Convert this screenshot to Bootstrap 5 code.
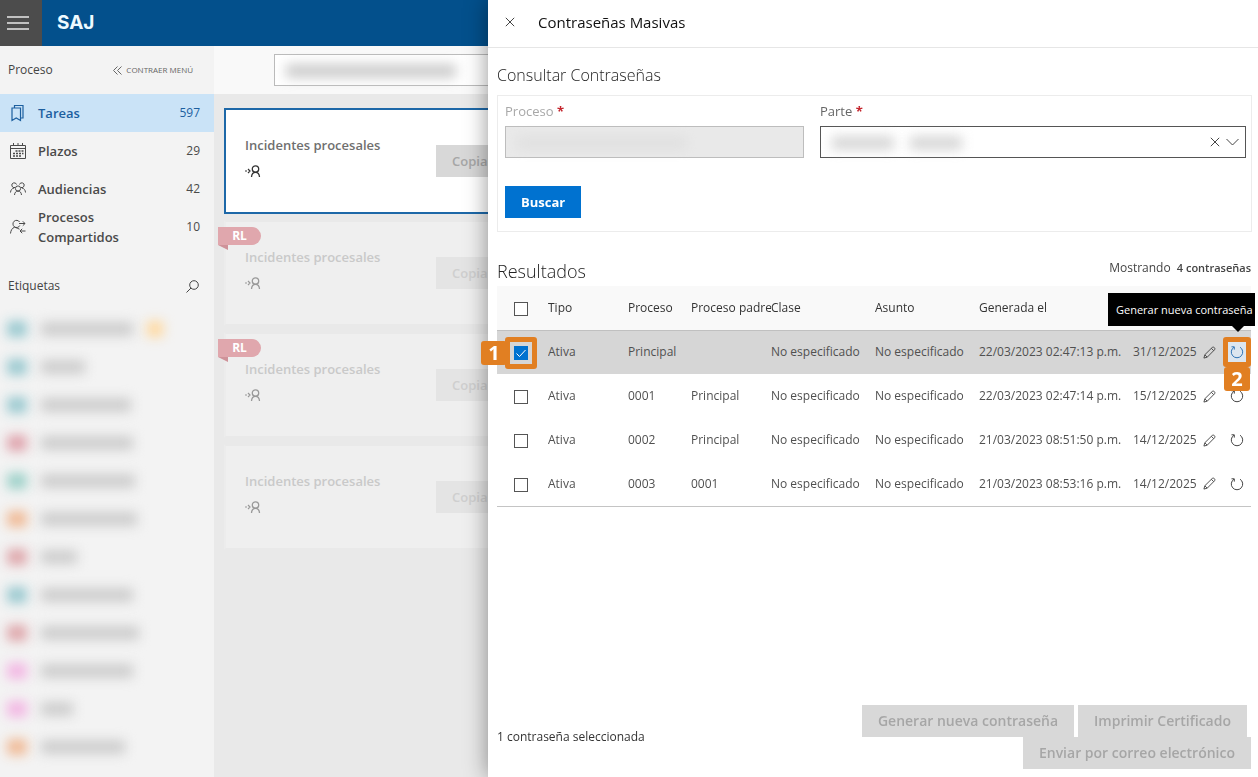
<!DOCTYPE html>
<html lang="es">
<head>
<meta charset="utf-8">
<meta name="viewport" content="width=device-width, initial-scale=1">
<title>SAJ - Contraseñas Masivas</title>
<link href="https://cdn.jsdelivr.net/npm/bootstrap@5.3.0/dist/css/bootstrap.min.css" rel="stylesheet">
<style>
  :root { --nav-w: 214px; --blue: #0072d0; --orange: #e17f22; }
  html, body { height: 100%; }
  body { font-family: "Open Sans", "Noto Sans", sans-serif; font-size: 12px; line-height: 20px; color: #444; overflow: hidden; }
  svg { display: block; fill: none; stroke: currentColor; flex: none; }
  a { color: inherit; text-decoration: none; }
  .btn { --bs-btn-border-radius: 0; --bs-btn-border-width: 0; --bs-btn-padding-x: 16px; --bs-btn-padding-y: 6px; --bs-btn-font-size: 14px; --bs-btn-line-height: 20px; --bs-btn-font-weight: 600; white-space: nowrap; }
  .btn-flat { --bs-btn-disabled-bg: #d8d8d8; --bs-btn-disabled-color: #a6a6a6; --bs-btn-disabled-opacity: 1; }
  .icon-btn { border: 0; background: none; padding: 0; color: #444; display: inline-flex; }

  .top-bar { height: 46px; background: #03508c; }
  .menu-toggle { width: 42px; height: 46px; background: #4c4c4c; color: #e8e8e8; align-items: center; padding-left: 7px; }
  .brand { font: 700 19px/20px "Inter", sans-serif; color: #eefaff; margin-left: 15px; }

  .side { width: var(--nav-w); background: #f3f3f3; flex: none; }
  .side-head { height: 48px; padding: 0 21px 0 8px; }
  .side-head.tags-head { padding-right: 15px; }
  .side-title { font-size: 12px; font-weight: 500; }
  .collapse-link { font-size: 8px; font-weight: 500; color: #666; }
  .side-item { height: 38px; padding: 0 14px 0 10px; font-size: 13px; font-weight: 600; gap: 12px; color: #4a4a4a; }
  .side-item .count { font-size: 12px; font-weight: 500; }
  .side-item.active { background: #cae3f7; color: #1c5f9f; }
  .tag-row { height: 38px; padding-left: 7px; gap: 14px; }
  .smudge { filter: blur(6px); height: 14px; background: #cdcdcd; }
  .smudge.chip { width: 20px; height: 16px; background: var(--c); opacity: .9; }
  .smudge.orb { width: 16px; height: 16px; background: #ffd9a0; }

  .search-bar { height: 48px; background: #f9f9f9; padding: 8px 0 8px 60px; }
  .search-bar .form-control { height: 32px; border: 1px solid #bbb; border-radius: 0; background: #fff; }
  .over-field { position: absolute; left: 12px; top: 10px; }
  .task-list { background: #e9e9e9; padding: 14px 0 0 10px; gap: 6px; }
  .task { position: relative; height: 106px; padding: 0 0 0 19px; background: #fff; border: 2px solid #1d68a8; font-size: 13px; font-weight: 600; color: #6f6f6f; }
  .task.idle { background: #efefef; border-color: #e9e9e9 #ececec; color: #c9c9c9; }
  .task-text { width: 191px; gap: 10px; padding-bottom: 10px; }
  .task-text svg { color: #333; }
  .task.idle svg { color: #999; }
  .task .btn-flat { --bs-btn-font-size: 13px; }
  .task.idle .btn-flat { --bs-btn-disabled-bg: #e4e4e4; --bs-btn-disabled-color: #cfcfcf; }
  .flag { position: absolute; left: -8px; top: 5px; width: 43px; height: 18px; border-radius: 0 9px 9px 0; background: #e0a7ad; color: #fff; font-size: 12px; line-height: 18px; font-weight: 700; text-align: center; }
  .flag::after { content: ""; position: absolute; left: 0; top: 18px; border-top: 5px solid #cf9299; border-left: 10px solid transparent; }

  .drawer { position: fixed; top: 0; right: 0; bottom: 0; left: 488px; background: #fff; box-shadow: 0 0 22px rgba(0,0,0,.42); }
  .drawer-head { height: 48px; padding: 0 17px 3px; gap: 23px; border-bottom: 1px solid #e6e6e6; }
  .drawer-head h1 { font-size: 15px; line-height: 20px; font-weight: 400; color: #111; }
  .drawer-body { padding: 16px 7px 8px 9px; }
  .drawer-body h2 { font-size: 16px; line-height: 22px; font-weight: 300; color: #222; }
  .query-box { border: 1px solid #ececec; height: 137px; padding: 5px 5px 13px 7px; margin: 9px -1px 0 0; }
  .fields { display: grid; grid-template-columns: 299fr 426fr; gap: 16px; }
  .fields label { font-size: 13px; line-height: 20px; margin-bottom: 5px; display: block; color: #666; }
  .fields label.off { color: #a8a8a8; }
  .req { color: #c4262e; font-weight: 700; }
  .fields .form-control { height: 32px; border-radius: 0; border: 1px solid #555; }
  .fields .form-control:disabled { background: #e9e9e9; border-color: #bdbdbd; }
  .field-tools { position: absolute; right: 7px; top: 10px; gap: 6px; color: #444; }
  .btn-search { --bs-btn-bg: var(--blue); --bs-btn-color: #fff; --bs-btn-hover-bg: #0064b8; --bs-btn-hover-color: #fff; --bs-btn-font-size: 13px; --bs-btn-font-weight: 700; margin-top: 28px; }
  .results-head { margin: 26px 0 2px; }
  .results-head h2 { font-size: 18px; line-height: 26px; }
  .results-head strong { font-size: 11px; font-weight: 600; margin-left: 3px; }

  .grid { table-layout: fixed; width: 100%; border-bottom: 1px solid #c4c4c4; color: #505050; }
  .grid th, .grid td { height: 44px; padding: 0; white-space: nowrap; vertical-align: middle; position: relative; }
  .grid th { background: #f9f9f9; font-weight: 500; color: #333; border-bottom: 1px solid #c0c0c0; }
  .grid tr.picked td { background: #d6d6d6; }
  .grid .form-check-input { width: 14px; height: 14px; margin: 2px 0 0 17px; border: 1px solid #555; border-radius: 0; display: block; }
  .grid .form-check-input:checked { background-color: var(--blue); border-color: var(--blue); background-size: 14px; background-image: url("data:image/svg+xml,%3csvg xmlns='http://www.w3.org/2000/svg' viewBox='0 0 14 14'%3e%3cpath fill='none' stroke='%23fff' d='M2.500 7.500l3 3 6-6.500'/%3e%3c/svg%3e"); }
  .grid .icon-btn { display: flex; margin: auto; }
  .picked .icon-btn.renew { color: #2f74b5; }
  .ring { position: absolute; border: 5px solid var(--orange); border-radius: 3px; pointer-events: none; }
  .ring.on-check { left: 8px; top: 6px; width: 32px; height: 32px; }
  .ring.on-renew { right: 0; top: 6px; width: 28px; height: 30px; background: #dce6ef; z-index: 0; }
  .renew { position: relative; z-index: 1; }
  .step { position: absolute; background: var(--orange); color: #fff; font-size: 20px; line-height: 24px; font-weight: 700; width: 26px; text-align: center; border-radius: 3px; z-index: 2; }
  .step.one { left: -16px; top: 10px; }
  .step.two { right: 1px; top: 36px; }
  .tip { position: absolute; right: -4px; bottom: 48px; background: #000; color: #fff; font-size: 11px; line-height: 33px; height: 33px; font-weight: 500; width: 147px; padding-left: 8px; z-index: 3; }
  .tip::after { content: ""; position: absolute; right: 11px; top: 33px; border: 6px solid transparent; border-top-color: #000; }
  .note { color: #333; }
</style>
</head>
<body>
<svg class="d-none">
  <symbol id="x" viewBox="0 0 10 10"><path d="M.8.8l8.4 8.4M9.2.8L.8 9.2"/></symbol>
  <symbol id="person" viewBox="0 0 16 12"><path stroke-width="1.200" d="M0 6h2M3 4l2 2-2 2"/><circle stroke-width="1.300" cx="10.500" cy="4" r="3.200"/><path stroke-width="1.300" d="M6.500 12c.2-3 1.600-4.600 4-4.600s3.800 1.600 4 4.600"/></symbol>
  <symbol id="pencil" viewBox="0 0 14 14"><path d="M1 13l1-3.600L10 1.500c1.400-1.200 3.700 1 2.500 2.500L4.600 12zM9 2.500L11.500 5M2 9.500L4.500 12"/></symbol>
  <symbol id="renew" viewBox="0 0 14 14"><path d="M4 2.200A5.700 5.700 0 1 0 10 2.200M1.500 1.800h2.800v2.800"/></symbol>
</svg>

<div class="d-flex flex-column h-100">
  <header class="top-bar d-flex align-items-center">
    <button class="icon-btn menu-toggle" aria-label="Menú"><svg width="22" height="14" viewBox="0 0 22 14" stroke-width="1.600"><path d="M0 1h22M0 7h22M0 13h22"/></svg></button>
    <a class="brand" href="#">SAJ</a>
  </header>

  <div class="d-flex flex-grow-1">
    <nav class="side">
      <div class="side-head d-flex align-items-center justify-content-between">
        <span class="side-title">Proceso</span>
        <a class="collapse-link d-flex align-items-center gap-1" href="#"><svg width="9" height="9" viewBox="0 0 9 9"><path d="M4.500.5l-4 4 4 4M8.500.5l-4 4 4 4"/></svg>CONTRAER MENÚ</a>
      </div>
      <a class="side-item active d-flex align-items-center" href="#">
        <svg width="16" height="18" viewBox="0 0 16 18" stroke-width="1.200"><path d="M2 4h8.500v12.500L6.200 14 2 16.500zM4.500 4V1.500H13V14h-2.500"/></svg>
        <span class="flex-grow-1">Tareas</span><span class="count">597</span></a>
      <a class="side-item d-flex align-items-center" href="#">
        <svg width="16" height="18" viewBox="0 0 16 18"><path d="M.5 3.500h15v13H.5zM.5 6.500h15M3.500 1v3M8 1v3M12.500 1v3"/><path stroke-width="1.600" stroke-dasharray="2 1" d="M5.500 9h8M3 11.500h10.500M3 14h8"/></svg>
        <span class="flex-grow-1">Plazos</span><span class="count">29</span></a>
      <a class="side-item d-flex align-items-center" href="#">
        <svg width="16" height="14" viewBox="0 0 16 14"><circle cx="8" cy="6.500" r="2.600"/><path d="M4.500 13c.2-2.500 1.400-3.900 3.500-3.900s3.300 1.400 3.500 3.900M5 5.500A2.400 2.400 0 1 1 6.500 2.500M4 6C1.800 6.600.7 8 .5 10.500M11 5.500A2.400 2.400 0 1 0 9.500 2.500M12 6c2.200.6 3.300 2 3.500 4.500"/></svg>
        <span class="flex-grow-1">Audiencias</span><span class="count">42</span></a>
      <a class="side-item d-flex align-items-center" href="#">
        <svg width="16" height="16" viewBox="0 0 16 16"><path d="M9.800 6.500A3.600 3.600 0 1 1 9.600 3M4.500 8.200C2 9.200.8 11.500.5 14.500M4.500 8.200c1.800.8 3.500.9 5 2M9 4.500h6M12.800 2.300L15 4.500l-2.200 2.200M15.500 12H10M12.200 9.800L10 12l2.200 2.200"/></svg>
        <span class="flex-grow-1">Procesos<br>Compartidos</span><span class="count">10</span></a>

      <div class="side-head tags-head d-flex align-items-center justify-content-between mt-3">
        <span class="side-title">Etiquetas</span>
        <button class="icon-btn" aria-label="Buscar etiqueta"><svg width="13" height="13" viewBox="0 0 13 13"><circle cx="8" cy="5" r="4.300"/><path d="M5 8L.5 12.500"/></svg></button>
      </div>
      <div id="tags" aria-hidden="true"></div>
    </nav>

    <main class="flex-grow-1 d-flex flex-column">
      <div class="search-bar"><div class="position-relative">
        <input class="form-control" type="text" aria-label="Buscar">
        <div class="smudge over-field" style="width:170px"></div>
      </div></div>
      <div class="task-list d-flex flex-column flex-grow-1">
        <article class="task d-flex align-items-center"><div class="task-text d-flex flex-column"><span>Incidentes procesales</span><svg width="16" height="12"><use href="#person"/></svg></div><button class="btn btn-flat" disabled>Copiar</button></article>
        <article class="task idle d-flex align-items-center"><span class="flag">RL</span><div class="task-text d-flex flex-column"><span>Incidentes procesales</span><svg width="16" height="12"><use href="#person"/></svg></div><button class="btn btn-flat" disabled>Copiar</button></article>
        <article class="task idle d-flex align-items-center"><span class="flag">RL</span><div class="task-text d-flex flex-column"><span>Incidentes procesales</span><svg width="16" height="12"><use href="#person"/></svg></div><button class="btn btn-flat" disabled>Copiar</button></article>
        <article class="task idle d-flex align-items-center"><div class="task-text d-flex flex-column"><span>Incidentes procesales</span><svg width="16" height="12"><use href="#person"/></svg></div><button class="btn btn-flat" disabled>Copiar</button></article>
      </div>
    </main>
  </div>
</div>

<aside class="drawer d-flex flex-column" role="dialog" aria-labelledby="drawer-title">
  <div class="drawer-head d-flex align-items-center">
    <button class="icon-btn" aria-label="Cerrar"><svg width="10" height="10"><use href="#x"/></svg></button>
    <h1 class="mb-0" id="drawer-title">Contraseñas Masivas</h1>
  </div>
  <div class="drawer-body d-flex flex-column flex-grow-1">
    <h2 class="mb-0">Consultar Contraseñas</h2>
    <form class="query-box" onsubmit="return false">
      <div class="fields">
        <div>
          <label class="off" for="proceso">Proceso <span class="req">*</span></label>
          <div class="position-relative"><input class="form-control" id="proceso" type="text" disabled><div class="smudge over-field" style="width:170px;opacity:.3"></div></div>
        </div>
        <div>
          <label for="parte">Parte <span class="req">*</span></label>
          <div class="position-relative"><input class="form-control" id="parte" type="text" role="combobox" aria-expanded="false">
            <div class="over-field d-flex gap-3"><div class="smudge" style="width:62px;opacity:.8"></div><div class="smudge" style="width:52px;opacity:.8"></div></div>
            <div class="field-tools d-flex align-items-center">
              <button type="button" class="icon-btn" aria-label="Limpiar"><svg width="10" height="10"><use href="#x"/></svg></button>
              <button type="button" class="icon-btn" aria-label="Abrir"><svg width="13" height="12" viewBox="0 0 13 12"><path d="M.5 3l6 6 6-6"/></svg></button>
            </div>
          </div>
        </div>
      </div>
      <button class="btn btn-search">Buscar</button>
    </form>

    <div class="results-head d-flex justify-content-between">
      <h2 class="mb-0">Resultados</h2>
      <span>Mostrando <strong>4 contraseñas</strong></span>
    </div>
    <table class="grid">
      <colgroup><col style="width:51px"><col style="width:80px"><col style="width:63px"><col style="width:80px"><col style="width:104px"><col style="width:104px"><col style="width:154px"><col style="width:64px"><col style="width:25px"><col style="width:29px"></colgroup>
      <thead><tr><th><input class="form-check-input" type="checkbox" aria-label="Seleccionar todas"></th><th>Tipo</th><th>Proceso</th><th>Proceso padre</th><th>Clase</th><th>Asunto</th><th>Generada el</th><th></th><th></th><th></th></tr></thead>
      <tbody id="rows"></tbody>
    </table>

    <div class="mt-auto d-flex align-items-center">
      <span class="note text-nowrap">1 contraseña seleccionada</span>
      <div class="d-flex flex-wrap justify-content-end flex-grow-1">
        <button class="btn btn-flat me-1" disabled>Generar nueva contraseña</button>
        <button class="btn btn-flat me-1" disabled>Imprimir Certificado</button>
        <button class="btn btn-flat" disabled>Enviar por correo electrónico</button>
      </div>
    </div>
  </div>
</aside>

<script>
  const rows = [
    ["Principal", "", "22/03/2023 02:47:13 p.m.", "31/12/2025"],
    ["0001", "Principal", "22/03/2023 02:47:14 p.m.", "15/12/2025"],
    ["0002", "Principal", "21/03/2023 08:51:50 p.m.", "14/12/2025"],
    ["0003", "0001", "21/03/2023 08:53:16 p.m.", "14/12/2025"]
  ];
  document.getElementById("rows").innerHTML = rows.map(([proc, parent, made, until], i) => `
    <tr class="${i ? "" : "picked"}">
      <td><input class="form-check-input" type="checkbox" aria-label="Seleccionar ${proc}" ${i ? "" : "checked"}>${i ? "" : '<span class="ring on-check"></span><span class="step one">1</span>'}</td>
      <td>Ativa</td><td>${proc}</td><td>${parent}</td><td>No especificado</td><td>No especificado</td><td>${made}</td><td>${until}</td>
      <td><button class="icon-btn" aria-label="Editar"><svg width="13" height="13"><use href="#pencil"/></svg></button></td>
      <td>${i ? "" : '<span class="ring on-renew"></span><span class="step two">2</span><span class="tip" role="tooltip">Generar nueva contraseña</span>'}<button class="icon-btn renew" aria-label="Generar nueva contraseña"><svg width="14" height="14"><use href="#renew"/></svg></button></td>
    </tr>`).join("");

  const tags = [["#8fc4cc", 92, 1], ["#8fc4cc", 44], ["#8fc4cc", 90], ["#dd9aa4", 92], ["#93cdc4", 94], ["#f0b48c", 96], ["#dc9da2", 36], ["#8fc4cc", 92], ["#dc9da2", 98], ["#f3b0e2", 92], ["#f3b0e2", 32], ["#f0b48c", 84]];
  document.getElementById("tags").innerHTML = tags.map(([c, w, orb]) => `
    <div class="tag-row d-flex align-items-center"><div class="smudge chip" style="--c:${c}"></div><div class="smudge" style="width:${w}px"></div>${orb ? '<div class="smudge orb"></div>' : ""}</div>`).join("");
</script>
<script src="https://cdn.jsdelivr.net/npm/bootstrap@5.3.0/dist/js/bootstrap.bundle.min.js"></script>
</body>
</html>
